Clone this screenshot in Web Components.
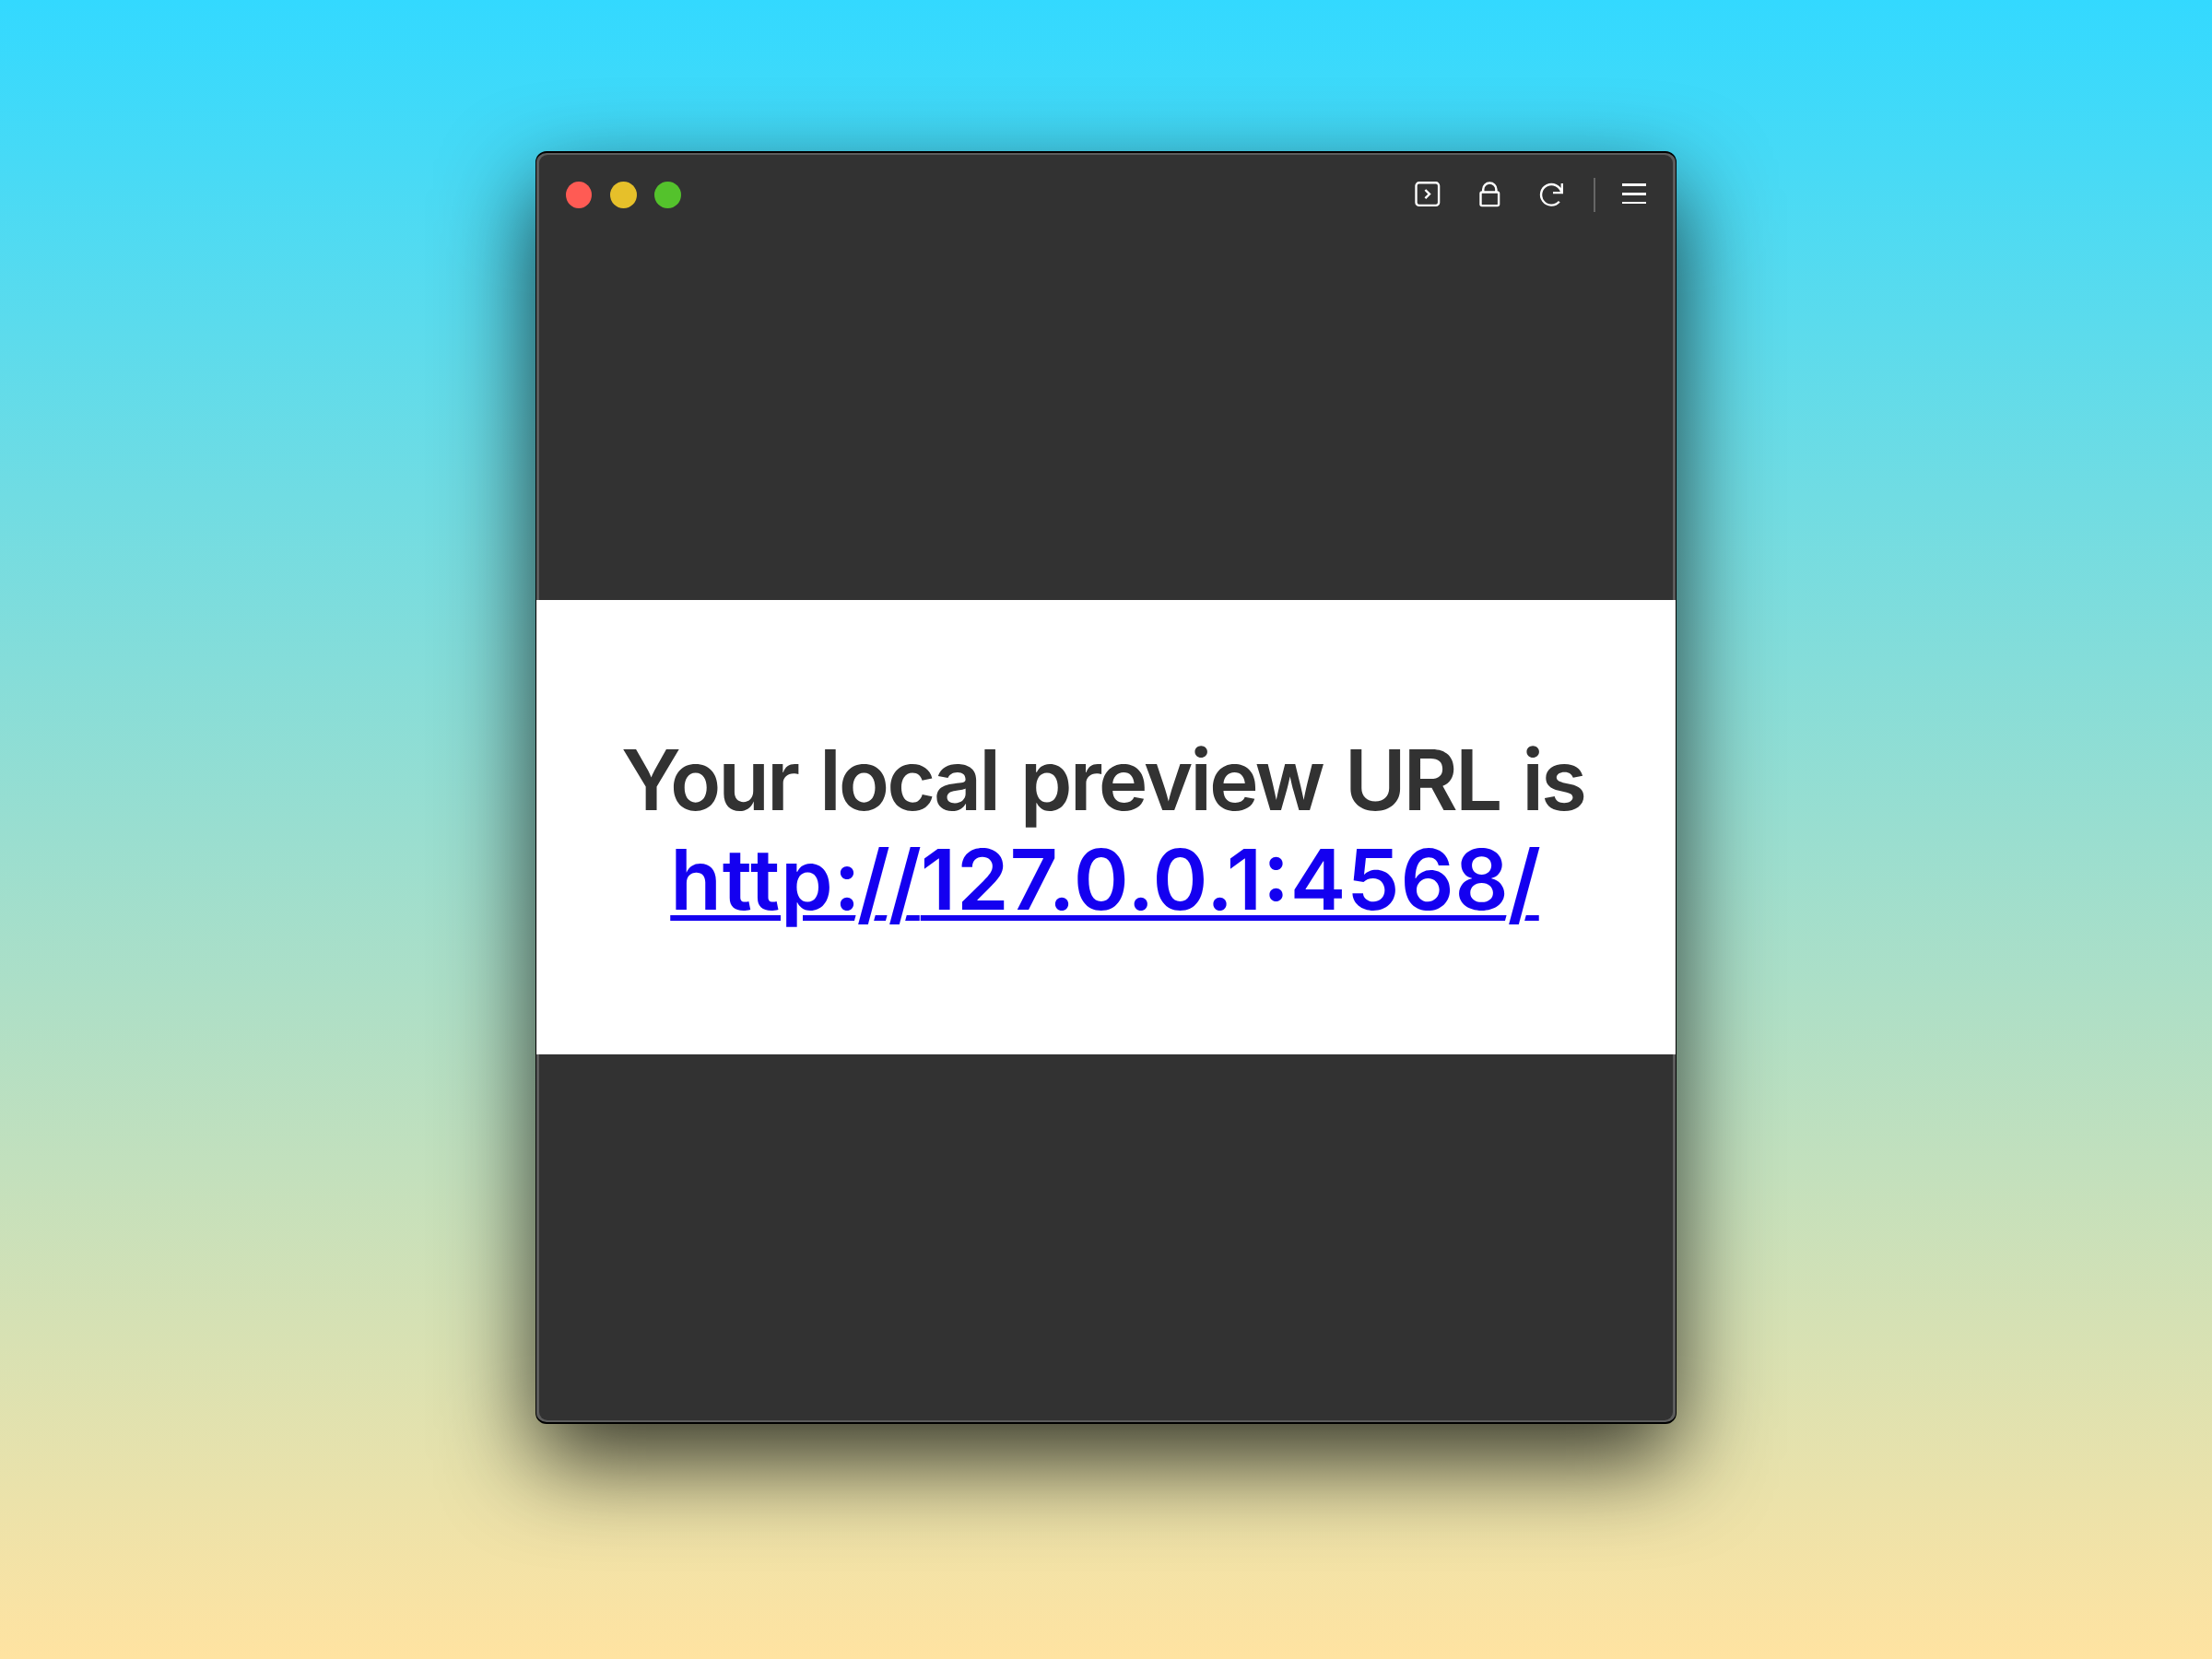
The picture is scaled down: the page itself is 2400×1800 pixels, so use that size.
<!DOCTYPE html>
<html lang="en">
<head>
<meta charset="utf-8">
<title>Local preview</title>
<style>
html,body{margin:0;height:100%}
body{font-family:Inter,"Liberation Sans",sans-serif;overflow:hidden}
a span{font-size:1.06em;line-height:0;vertical-align:-.06em;letter-spacing:-2.4px;margin-left:-5px;margin-right:1px;-webkit-text-stroke:10px #fff;paint-order:stroke fill}
a span:last-child{margin-left:-2px;margin-right:3px}
</style>
</head>
<body>
<desktop-stage>
  <app-window>
    <traffic-lights slot="controls"></traffic-lights>
    <window-tools slot="tools"></window-tools>
    <preview-message>Your local preview URL is<a slot="link" href="http://127.0.0.1:4568/">http:<span>//</span>127.0.0.1:4568<span>/</span></a></preview-message>
  </app-window>
</desktop-stage>
<script>
const define = (name, html) => customElements.define(name, class extends HTMLElement {
  constructor() {
    super();
    this.attachShadow({ mode: 'open' }).innerHTML = html;
  }
});

define('desktop-stage', `
<style>
:host{display:flex;flex-direction:column;align-items:center;box-sizing:border-box;width:2400px;height:1800px;padding-top:164px;
background:linear-gradient(180deg,#33d9ff 0%,#ffe3a1 100%)}
</style><slot></slot>`);

define('app-window', `
<style>
:host{display:flex;flex-direction:column;box-sizing:border-box;width:1238px;height:1381px;border:solid #000;border-width:2px 1px;border-radius:12px;
background:#5c5c5c;box-shadow:0 40px 100px rgba(0,0,0,.76)}
.bar,.foot{box-sizing:border-box;margin:0 3px;background:#323232}
.bar{height:483px;margin-top:2px;border-radius:9px 9px 0 0;padding:25px 29px 0;display:flex;justify-content:space-between;align-items:flex-start}
.body{height:493px;background:#fff;display:flex;justify-content:center}
.foot{flex:1;margin-bottom:2px;border-radius:0 0 9px 9px}
</style>
<div class="bar"><slot name="controls"></slot><slot name="tools"></slot></div>
<div class="body"><slot></slot></div>
<div class="foot"></div>`);

define('traffic-lights', `
<style>
:host{display:flex;gap:19px;padding-top:4px}
i{width:29px;height:29px;border-radius:50%}
.r{background:#ff5b54;width:28px;margin-right:1px}.y{background:#e6c02a}.g{background:#54c22c}
</style><i class="r"></i><i class="y"></i><i class="g"></i>`);

define('window-tools', `
<style>
:host{display:block;margin-right:-2px}
svg{display:block}
</style>
<svg width="256" height="38" viewBox="1532 193 256 38" fill="none" stroke="#fff" stroke-width="2.4">
<rect x="1536.5" y="198.3" width="24.6" height="24.6" rx="3.2"/>
<path stroke-width="2.4" d="M1546.4 206l4.6 4.6-4.6 4.6"/>
<rect x="1606.5" y="208.5" width="19.6" height="14.6" rx="1.5"/>
<path stroke-width="2.5" d="M1609.2 208v-2.5a7.1 7 0 0 1 14.2 0v2.5"/>
<path stroke-width="2.4" d="M1694.8 199v10.1h-9.8M1694.3 208.5a11.3 11.3 0 1 0-2.5 10.3"/>
<path stroke="#666" stroke-width="2" d="M1730 193v37"/>
<path stroke-width="3" d="M1760 200.5h26M1760 210.5h26"/><path stroke-width="2" d="M1760 220h26"/>
</svg>`);

define('preview-message', `
<style>
:host{display:flex;flex-direction:column;align-items:center;box-sizing:border-box;padding-top:142px;font-size:91px;line-height:107.5px;font-weight:600;color:#323232;white-space:nowrap;letter-spacing:-3px;word-spacing:3.8px}
span{padding-right:7px}
::slotted(a){color:#1400f0;letter-spacing:.85px;font-feature-settings:"calt" 1;text-decoration-thickness:6px;text-underline-offset:6px}
</style><span><slot></slot></span><slot name="link"></slot>`);
</script>
</body>
</html>
